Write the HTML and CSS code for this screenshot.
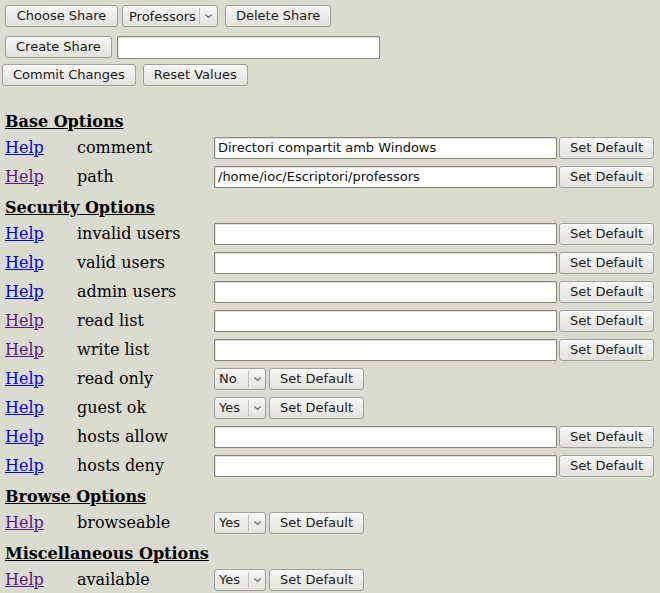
FILE: index.html
```html
<!DOCTYPE html>
<html>
<head>
<meta charset="utf-8">
<title>SWAT - Shares</title>
<link rel="stylesheet" href="styles.css">
</head>
<body>
<form class="page">
  <div class="share-bar bar-1">
    <button type="button" class="btn btn-choose">Choose Share</button>
    <span class="select select-share">
      <select class="select-native"><option>Professors</option></select>
      <span class="select-arrow"><svg width="9" height="6" viewBox="0 0 9 6"><path d="M1.2 1.4 L4.5 4.4 L7.8 1.4" fill="none" stroke="#666" stroke-width="1.2"/></svg></span>
    </span>
    <button type="button" class="btn">Delete Share</button>
  </div>
  <div class="share-bar bar-2">
    <button type="button" class="btn">Create Share</button>
    <input type="text" class="field field-new">
  </div>
  <div class="share-bar bar-3">
    <button type="button" class="btn">Commit Changes</button>
    <button type="button" class="btn">Reset Values</button>
  </div>

  <div class="options">
    <div class="section"><span class="section-title">Base Options</span></div>
    <div class="opt"><a class="help" href="#">Help</a><span class="label">comment</span><span class="ctl"><input type="text" class="field field-wide" value="Directori compartit amb Windows"><button type="button" class="btn btn-def">Set Default</button></span></div>
    <div class="opt"><a class="help visited" href="#">Help</a><span class="label">path</span><span class="ctl"><input type="text" class="field field-wide" value="/home/ioc/Escriptori/professors"><button type="button" class="btn btn-def">Set Default</button></span></div>

    <div class="section"><span class="section-title">Security Options</span></div>
    <div class="opt"><a class="help" href="#">Help</a><span class="label">invalid users</span><span class="ctl"><input type="text" class="field field-wide"><button type="button" class="btn btn-def">Set Default</button></span></div>
    <div class="opt"><a class="help" href="#">Help</a><span class="label">valid users</span><span class="ctl"><input type="text" class="field field-wide"><button type="button" class="btn btn-def">Set Default</button></span></div>
    <div class="opt"><a class="help" href="#">Help</a><span class="label">admin users</span><span class="ctl"><input type="text" class="field field-wide"><button type="button" class="btn btn-def">Set Default</button></span></div>
    <div class="opt"><a class="help visited" href="#">Help</a><span class="label">read list</span><span class="ctl"><input type="text" class="field field-wide"><button type="button" class="btn btn-def">Set Default</button></span></div>
    <div class="opt"><a class="help visited" href="#">Help</a><span class="label">write list</span><span class="ctl"><input type="text" class="field field-wide"><button type="button" class="btn btn-def">Set Default</button></span></div>
    <div class="opt"><a class="help" href="#">Help</a><span class="label">read only</span><span class="ctl"><span class="select select-yn"><select class="select-native"><option>No</option><option>Yes</option></select><span class="select-arrow"><svg width="9" height="6" viewBox="0 0 9 6"><path d="M1.2 1.4 L4.5 4.4 L7.8 1.4" fill="none" stroke="#666" stroke-width="1.2"/></svg></span></span><button type="button" class="btn btn-def btn-after-sel">Set Default</button></span></div>
    <div class="opt"><a class="help" href="#">Help</a><span class="label">guest ok</span><span class="ctl"><span class="select select-yn"><select class="select-native"><option>Yes</option><option>No</option></select><span class="select-arrow"><svg width="9" height="6" viewBox="0 0 9 6"><path d="M1.2 1.4 L4.5 4.4 L7.8 1.4" fill="none" stroke="#666" stroke-width="1.2"/></svg></span></span><button type="button" class="btn btn-def btn-after-sel">Set Default</button></span></div>
    <div class="opt"><a class="help" href="#">Help</a><span class="label">hosts allow</span><span class="ctl"><input type="text" class="field field-wide"><button type="button" class="btn btn-def">Set Default</button></span></div>
    <div class="opt"><a class="help" href="#">Help</a><span class="label">hosts deny</span><span class="ctl"><input type="text" class="field field-wide"><button type="button" class="btn btn-def">Set Default</button></span></div>

    <div class="section"><span class="section-title">Browse Options</span></div>
    <div class="opt"><a class="help visited" href="#">Help</a><span class="label">browseable</span><span class="ctl"><span class="select select-yn"><select class="select-native"><option>Yes</option><option>No</option></select><span class="select-arrow"><svg width="9" height="6" viewBox="0 0 9 6"><path d="M1.2 1.4 L4.5 4.4 L7.8 1.4" fill="none" stroke="#666" stroke-width="1.2"/></svg></span></span><button type="button" class="btn btn-def btn-after-sel">Set Default</button></span></div>

    <div class="section"><span class="section-title">Miscellaneous Options</span></div>
    <div class="opt"><a class="help visited" href="#">Help</a><span class="label">available</span><span class="ctl"><span class="select select-yn"><select class="select-native"><option>Yes</option><option>No</option></select><span class="select-arrow"><svg width="9" height="6" viewBox="0 0 9 6"><path d="M1.2 1.4 L4.5 4.4 L7.8 1.4" fill="none" stroke="#666" stroke-width="1.2"/></svg></span></span><button type="button" class="btn btn-def btn-after-sel">Set Default</button></span></div>
  </div>
</form>
</body>
</html>
```

FILE: styles.css
```css
html, body {
  margin: 0;
  padding: 0;
  background: #dcdbd0;
}
body {
  font-family: "DejaVu Serif", serif;
  font-size: 16px;
  color: #000;
}
.page {
  margin: 0;
  padding-top: 5px;
}

/* buttons */
.btn {
  box-sizing: border-box;
  height: 22px;
  margin: 0;
  padding: 0 10px;
  border: 1px solid #a29f98;
  border-radius: 3px;
  background: linear-gradient(#f8f7f5, #e4e2dd);
  box-shadow: inset 0 1px 0 #ffffff;
  font-family: "DejaVu Sans", sans-serif;
  font-size: 13px;
  color: #1a1a1a;
  line-height: 20px;
  white-space: nowrap;
}
.btn-choose { width: 113px; padding: 0; }

/* text fields */
.field {
  box-sizing: border-box;
  height: 22px;
  margin: 0;
  padding: 0 3px;
  border: 1px solid #8c877d;
  border-radius: 1px;
  background: #fff;
  box-shadow: inset 1px 1px 0 #e4e1da;
  font-family: "DejaVu Sans", sans-serif;
  font-size: 13px;
  color: #111;
  outline: none;
}

/* selects */
.select {
  position: relative;
  display: inline-block;
  height: 22px;
  flex: none;
}
.select-native {
  -webkit-appearance: none;
  appearance: none;
  box-sizing: border-box;
  height: 22px;
  width: 100%;
  margin: 0;
  padding: 0 0 0 6px;
  border: 1px solid #a29f98;
  border-radius: 3px;
  background: linear-gradient(#f8f7f5, #e4e2dd);
  box-shadow: inset 0 1px 0 #ffffff;
  font-family: "DejaVu Sans", sans-serif;
  font-size: 13px;
  color: #1a1a1a;
  outline: none;
}
.select-arrow {
  position: absolute;
  top: 3px;
  bottom: 3px;
  right: 1px;
  width: 17px;
  border-left: 1px solid #c4c1b9;
  display: flex;
  align-items: center;
  justify-content: center;
  pointer-events: none;
}
.select-share { width: 96px; }
.select-yn { width: 52px; }
.select-yn .select-native { padding-left: 4px; }
.select-yn .select-arrow { width: 16px; }

/* top bars */
.share-bar {
  display: flex;
  align-items: center;
  height: 22px;
}
.bar-1 {
  padding-left: 5px;
  gap: 4px;
}
.bar-1 .select-share + .btn { margin-left: 3px; }
.bar-2 {
  margin-top: 9px;
  padding-left: 5px;
  gap: 5px;
}
.field-new { width: 263px; height: 23px; }
.bar-3 {
  margin-top: 6px;
  padding-left: 2px;
  gap: 7px;
}

/* options table */
.options {
  margin-top: 19px;
  padding-left: 5px;
}
.section {
  height: 28px;
  padding-top: 5px;
  box-sizing: border-box;
  line-height: 23px;
}
.section-title {
  font-weight: bold;
  text-decoration: underline;
}
.opt {
  display: flex;
  align-items: center;
  height: 29px;
}
.help {
  width: 72px;
  flex: none;
  color: #0000ee;
  text-decoration: underline;
}
.help.visited { color: #551a8b; }
.label {
  width: 137px;
  flex: none;
}
.ctl {
  display: flex;
  align-items: center;
  gap: 2px;
}
.field-wide { width: 343px; }
.btn-def { width: 95px; padding: 0; }
.btn-after-sel { margin-left: 1px; }
```
